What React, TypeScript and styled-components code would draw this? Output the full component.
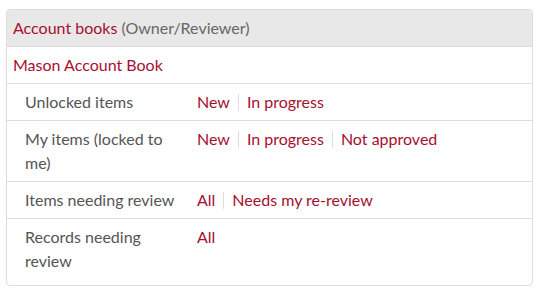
import React from "react";
import styled, { createGlobalStyle } from "styled-components";

const GlobalStyle = createGlobalStyle`
  body {
    margin: 0;
    font-family: Lato, "Open Sans", sans-serif;
    font-size: 16px;
    color: #555;
    background: #fff;
  }
`;

const Panel = styled.div`
  margin: 9px 6px 0 6px;
  border: 1px solid #ddd;
  border-radius: 4px;
  overflow: hidden;
  padding-bottom: 6px;
`;

const Heading = styled.div`
  background: #e8e8e8;
  border-bottom: 1px solid #ddd;
  padding: 6px 6px;
  line-height: 24px;
`;

const Link = styled.a`
  color: #a6102f;
  text-decoration: none;
`;

const Muted = styled.span`
  color: #666;
`;

const TitleRow = styled.div`
  padding: 6px 6px;
  line-height: 24px;
  border-bottom: 1px solid #ddd;
`;

const Row = styled.div<{ $last?: boolean }>`
  display: grid;
  grid-template-columns: 190px 1fr;
  line-height: 24px;
  border-bottom: ${(p) => (p.$last ? "none" : "1px solid #ddd")};
`;

const Label = styled.div`
  padding: 6px 12px 6px 18px;
  color: #555;
`;

const Links = styled.div`
  padding: 6px 6px 6px 0;
  display: flex;
  align-items: flex-start;
`;

const Sep = styled.span`
  display: inline-block;
  width: 1px;
  height: 17px;
  margin: 4px 8px 0;
  background: #ddd;
`;

const rows = [
  { label: "Unlocked items", links: ["New", "In progress"] },
  { label: "My items (locked to me)", links: ["New", "In progress", "Not approved"] },
  { label: "Items needing review", links: ["All", "Needs my re-review"] },
  { label: "Records needing review", links: ["All"] },
];

const App = () => {
  return (
    <>
      <GlobalStyle />
      <Panel>
        <Heading>
          <Link href="#">Account books</Link> <Muted>(Owner/Reviewer)</Muted>
        </Heading>
        <TitleRow>
          <Link href="#">Mason Account Book</Link>
        </TitleRow>
        {rows.map((r, i) => (
          <Row key={r.label} $last={i === rows.length - 1}>
            <Label>{r.label}</Label>
            <Links>
              {r.links.map((l, j) => (
                <React.Fragment key={l}>
                  {j > 0 && <Sep />}
                  <Link href="#">{l}</Link>
                </React.Fragment>
              ))}
            </Links>
          </Row>
        ))}
      </Panel>
    </>
  );
};

export default App;
